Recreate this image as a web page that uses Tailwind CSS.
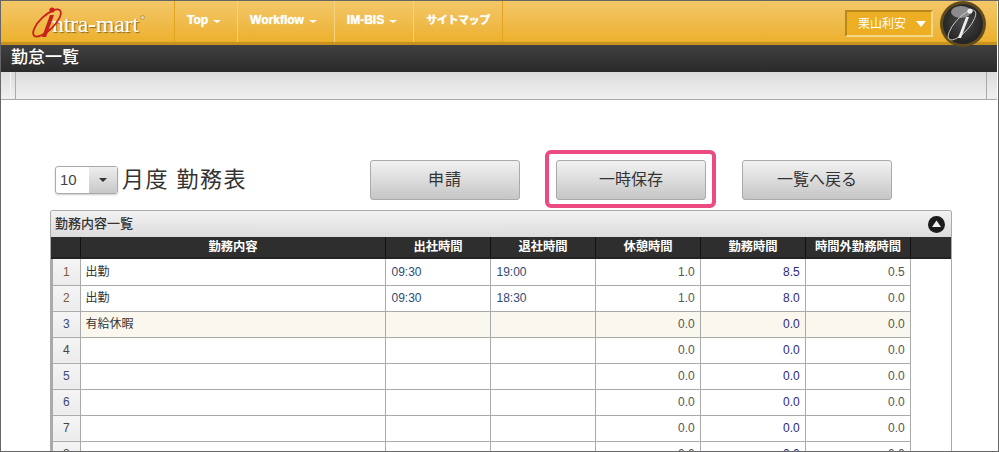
<!DOCTYPE html>
<html lang="ja">
<head>
  <meta charset="UTF-8" />
  <title>勤怠一覧</title>
  <script src="https://cdn.jsdelivr.net/npm/@tailwindcss/browser@4"></script>
</head>
<body class="bg-white overflow-hidden font-['Liberation_Sans','Noto_Sans_CJK_JP',sans-serif] text-[#333]">
  <div class="w-[999px] h-[452px] border border-[#666] overflow-hidden flex flex-col relative">

    <!-- top bar -->
    <header class="w-[996px] h-[44px] shrink-0 flex items-stretch bg-gradient-to-b from-[#f3c767] to-[#ecb02a] border-b-[3px] border-[#c8921f] relative">
      <div class="w-[173px] flex items-center relative">
        <svg class="absolute left-[31px] top-[4px]" width="34" height="36" viewBox="0 0 34 36">
          <ellipse cx="15" cy="18" rx="18" ry="7" transform="rotate(-44 15 18)" fill="none" stroke="#c8201c" stroke-width="1.8"/>
          <circle cx="20" cy="5" r="2.6" fill="#c8201c"/>
          <path d="M18 10 L22 10 L14 32 L10 32 Z" fill="#c8201c"/>
        </svg>
        <span class="ml-[51px] mt-[5px] font-['Liberation_Serif'] text-[24px] leading-none text-white [text-shadow:1px_1px_1px_#8a6a1e] tracking-[-0.3px]">ntra-mart</span>
        <span class="absolute left-[139px] top-[14px] w-[5px] h-[5px] rounded-full bg-[#e8d5a0] border border-[#b89a50]"></span>
      </div>
      <nav class="flex items-stretch text-white text-[12px] font-bold border-l border-r border-[#e2a41f] [text-shadow:0_0_1px_#fff]">
        <a class="w-[63px] flex items-center justify-center gap-[5px] pb-[3px] pr-[4px] border-r border-[#f5d27e]">Top <i class="mt-[3px] border-x-[4px] border-t-[3px] border-x-transparent border-t-white"></i></a>
        <a class="w-[97px] flex items-center justify-center gap-[5px] pb-[3px] pr-[5px] border-r border-[#f5d27e]">Workflow <i class="mt-[3px] border-x-[4px] border-t-[3px] border-x-transparent border-t-white"></i></a>
        <a class="w-[79px] flex items-center justify-center gap-[5px] pb-[3px] pr-[4px] border-r border-[#f5d27e]">IM-BIS <i class="mt-[3px] border-x-[4px] border-t-[3px] border-x-transparent border-t-white"></i></a>
        <a class="w-[88px] flex items-center justify-center pb-[3px] text-[11px] tracking-[-0.4px]">サイトマップ</a>
      </nav>
      <div class="ml-auto mr-[64px] mt-[9px] w-[88px] h-[27px] bg-[#ecae22] border-2 border-[#b88a1c] border-b-[#f6d68a] border-r-[#f6d68a] flex items-center text-white text-[12px] pl-[11px]">
        栗山利安
        <i class="ml-[10px] border-x-[5px] border-t-[6px] border-x-transparent border-t-white"></i>
      </div>
      <svg class="absolute left-[939px] top-0" width="46" height="47" viewBox="0 0 46 47">
        <defs>
          <radialGradient id="ball" cx="50%" cy="45%" r="55%">
            <stop offset="0" stop-color="#4a4a4a"/>
            <stop offset="1" stop-color="#222"/>
          </radialGradient>
        </defs>
        <circle cx="23" cy="23" r="23" fill="#5f4b1c"/>
        <circle cx="23" cy="23" r="20" fill="url(#ball)"/>
        <ellipse cx="21" cy="11" rx="10" ry="6" fill="#8c8c8c"/>
        <ellipse cx="22" cy="24" rx="19" ry="7" transform="rotate(-48 22 24)" fill="none" stroke="#ccc" stroke-width="0.9"/>
        <circle cx="30" cy="10" r="2.6" fill="#eee"/>
        <path d="M26 16 L29 16 L21 37 L18 37 Z" fill="#eee"/>
      </svg>
    </header>

    <!-- title bar -->
    <div class="w-[996px] h-[27px] shrink-0 bg-gradient-to-b from-[#404040] to-[#2a2a2a] text-white text-[17px] font-medium leading-[26px] pl-[10px]">勤怠一覧</div>

    <!-- toolbar -->
    <div class="w-[996px] h-[28px] shrink-0 bg-gradient-to-b from-[#dcdcdc] to-[#f0f0f0] border-b border-[#aaa] flex">
      <div class="ml-[9px] w-[6px] border-x border-l-[#f5f5f5] border-r-[#aaa]"></div>
      <div class="ml-auto mr-[10px] border-l border-[#aaa]"></div>
    </div>

    <!-- month + buttons -->
    <div class="h-[110px] shrink-0 flex pt-[60px] pl-[54px]">
      <div class="w-[315px] flex items-center h-[40px]">
        <div class="w-[63px] h-[28px] flex border border-[#aaa] rounded-[3px] shadow-[0_1px_2px_#ccc]">
          <span class="w-[33px] text-[15px] leading-[26px] pl-[4px] text-[#444]">10</span>
          <span class="flex-1 bg-gradient-to-b from-[#eee] to-[#c8c8c8] flex items-center justify-center">
            <i class="border-x-[4px] border-t-[4px] border-x-transparent border-t-[#333]"></i>
          </span>
        </div>
        <span class="ml-[4px] text-[22px] leading-none text-[#333] tracking-[1.5px]">月度 勤務表</span>
      </div>
      <button class="w-[150px] h-[40px] rounded-[3px] border border-[#aaa] bg-gradient-to-b from-[#f2f2f2] to-[#c6c6c6] text-[16px] tracking-[1px] text-[#333]">申請</button>
      <div class="ml-[36px] relative">
        <button class="w-[150px] h-[40px] rounded-[3px] border border-[#aaa] bg-gradient-to-b from-[#f2f2f2] to-[#c6c6c6] text-[16px] text-[#333]">一時保存</button>
        <div class="absolute -left-[11px] -top-[10px] w-[171px] h-[58px] border-4 border-[#ec4a82] rounded-[6px]"></div>
      </div>
      <button class="ml-[36px] w-[150px] h-[40px] rounded-[3px] border border-[#aaa] bg-gradient-to-b from-[#f2f2f2] to-[#c6c6c6] text-[16px] text-[#333]">一覧へ戻る</button>
    </div>

    <!-- panel -->
    <section class="ml-[49px] w-[902px] flex-1 border-x border-t border-[#aaa] rounded-t-[3px] overflow-hidden">
      <div class="h-[26px] bg-gradient-to-b from-[#f2f2f2] to-[#dcdcdc] flex items-center justify-between pl-[4px] pr-[6px] text-[13px] font-medium text-[#333]">
        勤務内容一覧
        <svg width="17" height="17" viewBox="0 0 17 17">
          <circle cx="8.5" cy="8.5" r="8.5" fill="#1c1c1c"/>
          <path d="M8.5 4.5 L13 11 L4 11 Z" fill="#f2f2f2"/>
        </svg>
      </div>
      <div class="h-[22px] bg-[#2e2e2e] border-b-2 border-[#222] grid grid-cols-[30px_305px_105px_105px_105px_105px_105px_1fr] text-white text-[12.3px] font-bold text-center leading-[20px]">
        <div class="border-r border-[#111]"></div>
        <div class="border-r border-[#111]">勤務内容</div>
        <div class="border-r border-[#111]">出社時間</div>
        <div class="border-r border-[#111]">退社時間</div>
        <div class="border-r border-[#111]">休憩時間</div>
        <div class="border-r border-[#111]">勤務時間</div>
        <div class="border-r border-[#111]">時間外勤務時間</div>
      </div>
      <table class="table-fixed border-collapse text-[12px] w-[858px]">
        <colgroup>
          <col class="w-[28px]" /><col class="w-[305px]" /><col class="w-[105px]" /><col class="w-[105px]" /><col class="w-[105px]" /><col class="w-[105px]" /><col class="w-[105px]" />
        </colgroup>
        <tbody>
          <tr class="h-[26px]">
            <td class="bg-gradient-to-b from-[#f5f5f5] to-[#ebebeb] border-l-2 border-b border-r border-[#aaa] text-center text-[#7a5a3a]">1</td>
            <td class="border border-t-0 border-[#aaa] pl-[5px] text-[#333]">出勤</td>
            <td class="border border-t-0 border-[#aaa] pl-[6px] text-[#2f4a75]">09:30</td>
            <td class="border border-t-0 border-[#aaa] pl-[6px] text-[#2f4a75]">19:00</td>
            <td class="border border-t-0 border-[#aaa] pr-[4.75px] text-right text-[#555]">1.0</td>
            <td class="border border-t-0 border-[#aaa] pr-[4.75px] text-right text-[#2a2a80]">8.5</td>
            <td class="border border-t-0 border-[#aaa] pr-[4.75px] text-right text-[#555]">0.5</td>
          </tr>
          <tr class="h-[26px]">
            <td class="bg-gradient-to-b from-[#f5f5f5] to-[#ebebeb] border-l-2 border-b border-r border-[#aaa] text-center text-[#7a5a3a]">2</td>
            <td class="border border-[#aaa] pl-[5px] text-[#333]">出勤</td>
            <td class="border border-[#aaa] pl-[6px] text-[#2f4a75]">09:30</td>
            <td class="border border-[#aaa] pl-[6px] text-[#2f4a75]">18:30</td>
            <td class="border border-[#aaa] pr-[4.75px] text-right text-[#555]">1.0</td>
            <td class="border border-[#aaa] pr-[4.75px] text-right text-[#2a2a80]">8.0</td>
            <td class="border border-[#aaa] pr-[4.75px] text-right text-[#555]">0.0</td>
          </tr>
          <tr class="h-[26px] bg-[#faf8ee]">
            <td class="bg-gradient-to-b from-[#f5f5f5] to-[#ebebeb] border-l-2 border-b border-r border-[#aaa] text-center text-[#3a4a7a]">3</td>
            <td class="border border-[#aaa] pl-[5px] text-[#333]">有給休暇</td>
            <td class="border border-[#aaa]"></td>
            <td class="border border-[#aaa]"></td>
            <td class="border border-[#aaa] pr-[4.75px] text-right text-[#555]">0.0</td>
            <td class="border border-[#aaa] pr-[4.75px] text-right text-[#2a2a80]">0.0</td>
            <td class="border border-[#aaa] pr-[4.75px] text-right text-[#555]">0.0</td>
          </tr>
          <tr class="h-[26px]">
            <td class="bg-gradient-to-b from-[#f5f5f5] to-[#ebebeb] border-l-2 border-b border-r border-[#aaa] text-center text-[#444]">4</td>
            <td class="border border-[#aaa]"></td><td class="border border-[#aaa]"></td><td class="border border-[#aaa]"></td>
            <td class="border border-[#aaa] pr-[4.75px] text-right text-[#555]">0.0</td>
            <td class="border border-[#aaa] pr-[4.75px] text-right text-[#2a2a80]">0.0</td>
            <td class="border border-[#aaa] pr-[4.75px] text-right text-[#555]">0.0</td>
          </tr>
          <tr class="h-[26px]">
            <td class="bg-gradient-to-b from-[#f5f5f5] to-[#ebebeb] border-l-2 border-b border-r border-[#aaa] text-center text-[#3a4a7a]">5</td>
            <td class="border border-[#aaa]"></td><td class="border border-[#aaa]"></td><td class="border border-[#aaa]"></td>
            <td class="border border-[#aaa] pr-[4.75px] text-right text-[#555]">0.0</td>
            <td class="border border-[#aaa] pr-[4.75px] text-right text-[#2a2a80]">0.0</td>
            <td class="border border-[#aaa] pr-[4.75px] text-right text-[#555]">0.0</td>
          </tr>
          <tr class="h-[26px]">
            <td class="bg-gradient-to-b from-[#f5f5f5] to-[#ebebeb] border-l-2 border-b border-r border-[#aaa] text-center text-[#3a4a7a]">6</td>
            <td class="border border-[#aaa]"></td><td class="border border-[#aaa]"></td><td class="border border-[#aaa]"></td>
            <td class="border border-[#aaa] pr-[4.75px] text-right text-[#555]">0.0</td>
            <td class="border border-[#aaa] pr-[4.75px] text-right text-[#2a2a80]">0.0</td>
            <td class="border border-[#aaa] pr-[4.75px] text-right text-[#555]">0.0</td>
          </tr>
          <tr class="h-[26px]">
            <td class="bg-gradient-to-b from-[#f5f5f5] to-[#ebebeb] border-l-2 border-b border-r border-[#aaa] text-center text-[#444]">7</td>
            <td class="border border-[#aaa]"></td><td class="border border-[#aaa]"></td><td class="border border-[#aaa]"></td>
            <td class="border border-[#aaa] pr-[4.75px] text-right text-[#555]">0.0</td>
            <td class="border border-[#aaa] pr-[4.75px] text-right text-[#2a2a80]">0.0</td>
            <td class="border border-[#aaa] pr-[4.75px] text-right text-[#555]">0.0</td>
          </tr>
          <tr class="h-[26px]">
            <td class="bg-gradient-to-b from-[#f5f5f5] to-[#ebebeb] border-l-2 border-b border-r border-[#aaa] text-center text-[#444]">8</td>
            <td class="border border-[#aaa]"></td><td class="border border-[#aaa]"></td><td class="border border-[#aaa]"></td>
            <td class="border border-[#aaa] pr-[4.75px] text-right text-[#555]">0.0</td>
            <td class="border border-[#aaa] pr-[4.75px] text-right text-[#2a2a80]">0.0</td>
            <td class="border border-[#aaa] pr-[4.75px] text-right text-[#555]">0.0</td>
          </tr>
        </tbody>
      </table>
    </section>
  </div>
</body>
</html>
